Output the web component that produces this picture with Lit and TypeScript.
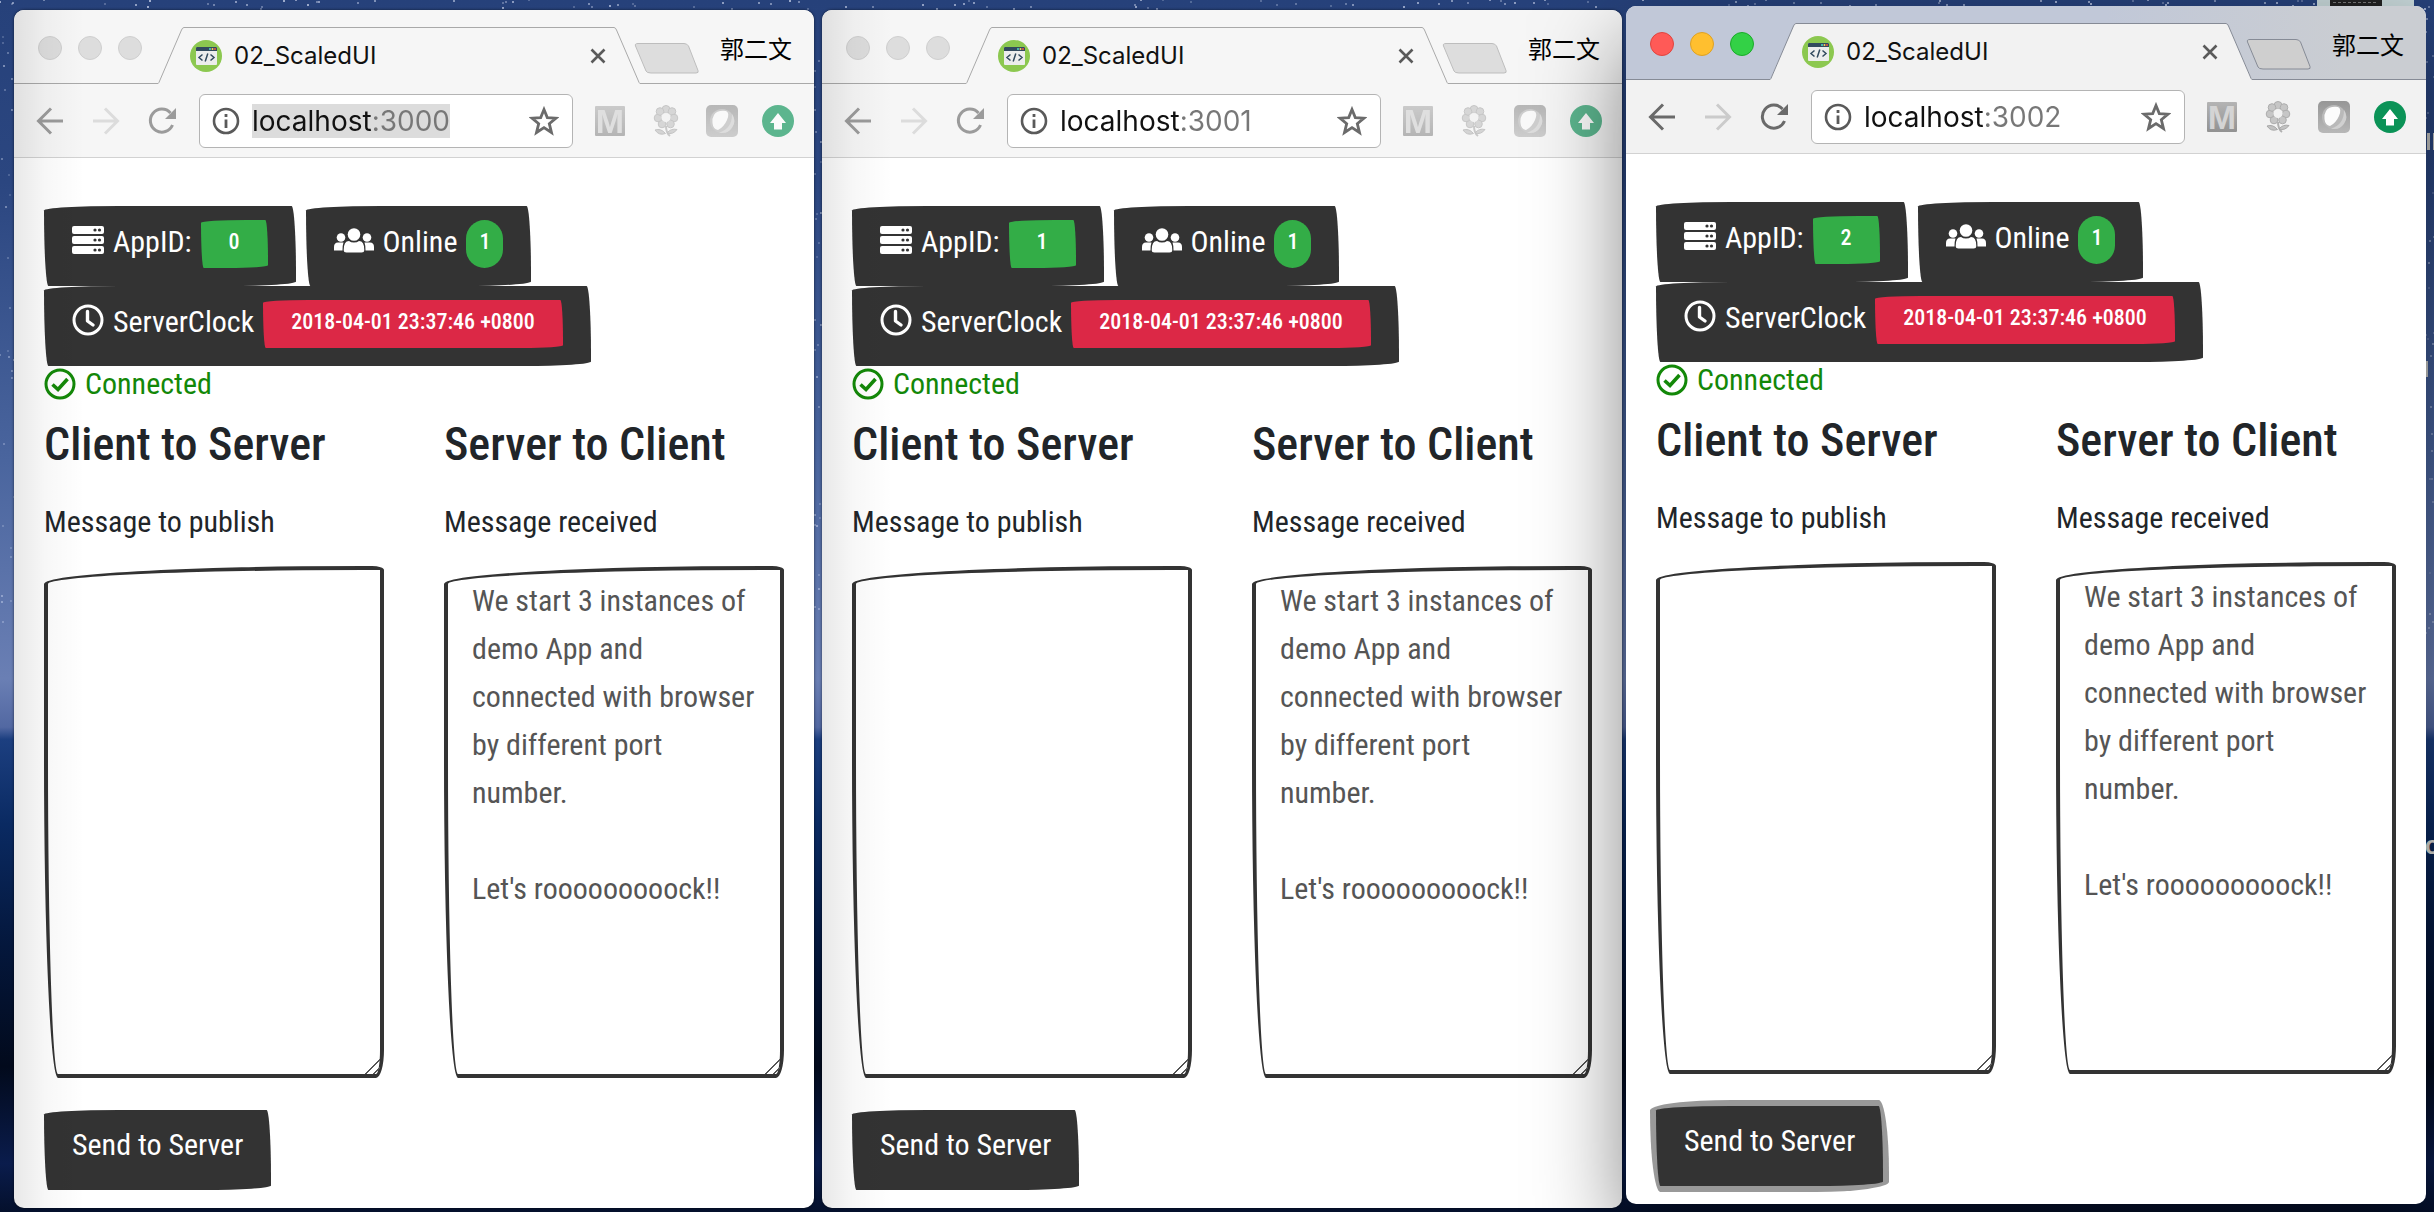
import { LitElement, html, css, svg } from "lit";
import { customElement, property } from "lit/decorators.js";
import { classMap } from "lit/directives/class-map.js";

const MESSAGE = `We start 3 instances of demo App and connected with browser by different port number.

Let's rooooooooock!!`;

const icons = {
  back: html`<svg viewBox="0 0 32 32" width="32" height="32" aria-hidden="true"><path d="M29 16H4.500M17 3.500L4.500 16L17 28.500" fill="none" stroke="currentColor" stroke-width="3"/></svg>`,
  forward: html`<svg viewBox="0 0 32 32" width="32" height="32" aria-hidden="true"><path d="M3 16H27.500M15 3.500L27.500 16L15 28.500" fill="none" stroke="currentColor" stroke-width="3"/></svg>`,
  reload: html`<svg viewBox="0 0 32 32" width="32" height="32" aria-hidden="true">
    <path d="M26.500 20A11.500 11.500 0 1 1 24.500 8" fill="none" stroke="currentColor" stroke-width="3"/>
    <path d="M30 3V14H19Z" fill="currentColor"/></svg>`,
  info: html`<svg viewBox="0 0 28 28" width="28" height="28" aria-hidden="true">
    <circle cx="14" cy="14" r="12" fill="none" stroke="#5a5a5a" stroke-width="2.600"/>
    <path d="M14 12.500V21M14 7V10" stroke="#5a5a5a" stroke-width="2.800"/></svg>`,
  star: html`<svg viewBox="0 0 30 30" width="30" height="30" aria-hidden="true">
    <path d="M15 3.500L18.300 11.600L27 12.200L20.300 17.700L22.500 26.500L15 21.600L7.500 26.500L9.700 17.700L3 12.200L11.700 11.600Z" fill="none" stroke="#6b6b6b" stroke-width="2.800" stroke-linejoin="miter"/></svg>`,
  close: html`<svg viewBox="0 0 16 16" width="16" height="16" aria-hidden="true"><path d="M1.500 1.500L14.500 14.500M14.500 1.500L1.500 14.500" stroke="#5a5a5a" stroke-width="2.600"/></svg>`,
  favicon: html`<svg viewBox="0 0 32 32" width="32" height="32" aria-hidden="true">
    <circle cx="16" cy="16" r="16" fill="#8cc850"/>
    <rect x="6" y="7" width="21" height="18" rx="1" fill="#eceded"/>
    <path d="M6 11V8a1 1 0 0 1 1-1H26a1 1 0 0 1 1 1V11Z" fill="#324a5e"/>
    <circle cx="20" cy="9" r="1" fill="#4cdbc4"/><circle cx="22.500" cy="9" r="1" fill="#ffd05b"/><circle cx="25" cy="9" r="1" fill="#f1543f"/>
    <path d="M12.500 14.500L9 17.500L12.500 20.500M20.500 14.500L24 17.500L20.500 20.500M17.800 13.500L15.200 21.500" fill="none" stroke="#324a5e" stroke-width="1.500"/></svg>`,
  gmail: html`<svg viewBox="0 0 32 32" width="32" height="32" aria-hidden="true">
    <defs><linearGradient id="mg" x2="0" y2="1"><stop stop-color="#b4b4b4"/><stop offset="1" stop-color="#929292"/></linearGradient></defs>
    <rect x="1" y="1" width="30" height="30" rx="1" fill="url(#mg)"/>
    <text x="16" y="28" text-anchor="middle" font-family="Liberation Sans" font-weight="bold" font-size="34" fill="#d4d4d4">M</text></svg>`,
  flower: html`<svg viewBox="0 0 32 32" width="32" height="32" aria-hidden="true">
    <g fill="#c6c6c6" stroke="#adadad">
      <circle cx="16" cy="4.500" r="4"/><circle cx="22" cy="6.500" r="3.800"/><circle cx="24" cy="13" r="3.800"/><circle cx="20.500" cy="19" r="3.800"/>
      <circle cx="12" cy="19" r="3.800"/><circle cx="8" cy="13" r="3.800"/><circle cx="10" cy="6.500" r="3.800"/>
    </g>
    <circle cx="16" cy="12.500" r="4.600" fill="#f2f2f2"/>
    <path d="M16 21Q16 28 20 31" fill="none" stroke="#b0b0b0" stroke-width="2"/>
    <path d="M5 25Q11 23 15.500 28.500Q9 31 5 25ZM27 24.500Q21 23 17 28Q23 30 27 24.500Z" fill="#c2c2c2" stroke="#a8a8a8"/></svg>`,
  bowl: html`<svg viewBox="0 0 32 32" width="32" height="32" aria-hidden="true">
    <defs><linearGradient id="bg" x2="0" y2="1"><stop stop-color="#969696"/><stop offset="1" stop-color="#b8b8b8"/></linearGradient></defs>
    <rect width="32" height="32" rx="5" fill="url(#bg)"/>
    <circle cx="16" cy="16" r="12" fill="#b9b9b9"/>
    <path d="M26 9A12 12 0 0 1 13 27.500Q26 24 26 9Z" fill="#d0d0d0"/>
    <path d="M8 10Q11 5 20 6Q24 8 21 15Q18 22 12 25Q7 24 6.500 18Q6 13 8 10Z" fill="#fcfcfc"/></svg>`,
  upload: html`<svg viewBox="0 0 32 32" width="32" height="32" aria-hidden="true">
    <circle cx="16" cy="16" r="16" fill="#0b9357"/>
    <path d="M16 8L24 18H20V24.500H12V18H8Z" fill="#fff"/></svg>`,
  server: html`<svg viewBox="0 0 32 28" width="32" height="28" aria-hidden="true">
    <rect width="32" height="8" rx="2" fill="#fff"/><rect y="10" width="32" height="8" rx="2" fill="#fff"/><rect y="20" width="32" height="8" rx="2" fill="#fff"/>
    <g fill="#333"><circle cx="23" cy="4" r="1.600"/><circle cx="27.500" cy="4" r="1.600"/><circle cx="23" cy="14" r="1.600"/><circle cx="27.500" cy="14" r="1.600"/><circle cx="23" cy="24" r="1.600"/><circle cx="27.500" cy="24" r="1.600"/></g></svg>`,
  users: html`<svg viewBox="0 0 40 26" width="40" height="26" aria-hidden="true"><g fill="#fff">
    <circle cx="7" cy="10.500" r="4.300"/><circle cx="33" cy="10.500" r="4.300"/>
    <path d="M0 23.500V20Q0 15.500 4 15.500H9.500Q8.500 18 8.500 23.500ZM40 23.500V20Q40 15.500 36 15.500H30.500Q31.500 18 31.500 23.500Z"/>
    <circle cx="20" cy="7.500" r="6.300"/>
    <path d="M9.700 23Q9.700 14 15 14Q17 15.500 20 15.500T25 14Q30.300 14 30.300 23Q30.300 25.500 27.500 25.500H12.500Q9.700 25.500 9.700 23Z"/></g></svg>`,
  clock: html`<svg viewBox="0 0 32 32" width="32" height="32" aria-hidden="true">
    <circle cx="16" cy="16" r="14" fill="none" stroke="#fff" stroke-width="3"/>
    <path d="M15.500 7.500V17L21 21" fill="none" stroke="#fff" stroke-width="3.400" stroke-linecap="round" stroke-linejoin="round"/></svg>`,
  check: html`<svg viewBox="0 0 32 32" width="32" height="32" aria-hidden="true">
    <circle cx="16" cy="16" r="14" fill="none" stroke="#138808" stroke-width="3"/>
    <path d="M8.500 16.500L14 21.500L23.500 11" fill="none" stroke="#138808" stroke-width="3.600"/></svg>`,
};

@customElement("status-button")
export class StatusButton extends LitElement {
  static styles = css`
    :host { display: block; }
    .status {
      display: flex;
      align-items: flex-start;
      gap: 9px;
      height: 80px;
      padding: 14px 28px 0;
      border: 0;
      border-radius: 255px 15px 225px 15px / 15px 225px 15px 255px;
      background: #333;
      color: #fff;
      font: 30px/44px "Roboto Condensed", "Liberation Sans", sans-serif;
    }
    .icon { display: flex; align-items: center; height: 40px; }
    .badge {
      height: 48px;
      padding: 0 28px;
      border-radius: 255px 15px 225px 15px / 15px 225px 15px 255px;
      background: #33ad47;
      font-size: 22px;
      font-weight: 500;
    }
    .danger { background: #dc2846; }
    .pill { padding: 0 13px; border-radius: 20px; }
  `;
  @property() label = "";
  @property() value = "";
  @property() tone = "";
  @property({ attribute: false }) icon: unknown;

  render() {
    return html`<button class="status" type="button">
      <span class="icon">${this.icon}</span>
      <span>${this.label}</span>
      <span class=${classMap({ badge: true, danger: this.tone === "danger", pill: this.tone === "pill" })}>${this.value}</span>
    </button>`;
  }
}

@customElement("demo-page")
export class DemoPage extends LitElement {
  static styles = css`
    :host { display: block; font: 30px/48px "Roboto Condensed", "Liberation Sans", sans-serif; color: #212529; }
    .page { padding: 48px 30px 18px; }
    .statuses { display: flex; flex-wrap: wrap; gap: 0 10px; }
    .connection { display: flex; align-items: center; gap: 9px; height: 36px; color: #138808; }
    .columns { display: grid; grid-template-columns: 1fr 1fr; gap: 60px; margin-top: 12px; }
    h2 { margin: 0 0 24px; font-size: 46px; line-height: 60px; font-weight: 500; white-space: nowrap; }
    label { display: block; margin-bottom: 20px; }
    textarea {
      display: block;
      box-sizing: border-box;
      width: 100%;
      margin: 0;
      padding: 7px 24px 17px;
      border: 4px solid #333;
      border-radius: 320px 12px 8px 14px / 18px 4px 28px 320px;
      background: transparent;
      color: #555;
      font: 30px/48px "Roboto Condensed", "Liberation Sans", sans-serif;
      overflow: hidden;
      outline: none;
    }
    textarea::-webkit-resizer {
      background: linear-gradient(135deg, transparent 48%, #555 48%, #555 55%, transparent 55%, transparent 74%, #555 74%, #555 81%, transparent 81%);
    }
    .send {
      display: block;
      height: 80px;
      margin-top: 32px;
      padding: 0 28px 10px;
      border: 0;
      border-radius: 255px 15px 225px 15px / 15px 225px 15px 255px;
      background: #333;
      color: #fff;
      font: 30px/48px "Roboto Condensed", "Liberation Sans", sans-serif;
    }
    .ring { box-shadow: 0 0 0 6px #999; }
  `;
  @property({ type: Number }) appId = 0;
  @property({ type: Boolean }) focusedSend = false;

  render() {
    return html`<main class="page">
      <div class="statuses">
        <status-button .icon=${icons.server} label="AppID:" value=${String(this.appId)}></status-button>
        <status-button .icon=${icons.users} label="Online" value="1" tone="pill"></status-button>
        <status-button .icon=${icons.clock} label="ServerClock" value="2018-04-01 23:37:46 +0800" tone="danger"></status-button>
      </div>
      <div class="connection">${icons.check}<span>Connected</span></div>
      <div class="columns">
        <section>
          <h2>Client to Server</h2>
          <label for="publish">Message to publish</label>
          <textarea id="publish" rows="10"></textarea>
        </section>
        <section>
          <h2>Server to Client</h2>
          <label for="received">Message received</label>
          <textarea id="received" rows="10" .value=${MESSAGE}></textarea>
        </section>
      </div>
      <button type="button" class=${classMap({ send: true, ring: this.focusedSend })}>Send to Server</button>
    </main>`;
  }
}

@customElement("browser-window")
export class BrowserWindow extends LitElement {
  static styles = css`
    :host {
      display: block;
      position: relative;
      box-sizing: border-box;
      min-height: calc(100vh - 14px);
      border-radius: 10px;
      overflow: hidden;
      background: #fff;
      font-family: Inter, "Noto Sans CJK SC", sans-serif;
      --strip: #f6f6f6;
      --tab: #f6f6f6;
      --line: #a9a9a9;
      --plus: #dddddd;
      box-shadow: 0 0 3px rgba(0, 0, 0, 0.6);
    }
    :host([active]) {
      --strip: linear-gradient(90deg, #c1c8d8 60%, #cacdd2 90%);
      --tab: #f2f2f2;
      --line: #868b96;
      --plus: #cfcfcf;
      box-shadow: 0 36px 90px rgba(0, 0, 0, 0.5);
    }
    :host(:not([active]))::after {
      content: "";
      position: absolute;
      inset: 0 auto 0 0;
      width: 70px;
      background: linear-gradient(90deg, rgba(0, 0, 0, 0.09), rgba(0, 0, 0, 0.03) 45%, transparent);
      pointer-events: none;
    }
    button { display: flex; padding: 0; border: 0; background: none; color: inherit; }
    .strip { display: flex; height: 74px; padding: 0 22px 0 24px; box-sizing: border-box; background: var(--strip); box-shadow: inset 0 -1px var(--line); }
    .lights { display: flex; gap: 16px; margin: 26px 16px 0 0; }
    .light { box-sizing: border-box; width: 24px; height: 24px; border: 1px solid #cfcfcf; border-radius: 50%; background: #dddddd; }
    :host([active]) .red { background: #ff5a57; border-color: #e0443e; }
    :host([active]) .amber { background: #ffbf2f; border-color: #dea123; }
    :host([active]) .green { background: #33d146; border-color: #1aab29; }
    .tab { display: flex; flex: 1; margin-top: 17px; }
    .slant { flex: none; fill: var(--tab); stroke: var(--line); }
    .face { display: flex; flex: 1; align-items: center; gap: 12px; padding: 0 8px 0 6px; border-top: 1px solid var(--line); background: var(--tab); }
    .title { flex: 1; font-size: 24px; line-height: 32px; color: #111; }
    .plus { flex: none; margin: 32px 20px 0 -6px; align-self: flex-start; fill: var(--plus); stroke: var(--line); }
    :host(:not([active])) .plus { stroke: #bdbdbd; }
    .user { margin-top: 20px; font: 24px/36px "Noto Sans CJK SC", sans-serif; color: #000; }
    .toolbar { display: flex; align-items: center; gap: 24px; height: 73px; padding: 0 20px; border-bottom: 1px solid #d2d2d2; background: var(--tab); color: #6a6a6a; }
    :host(:not([active])) .toolbar { color: #9b9b9b; }
    .off { opacity: 0.28; }
    .address { display: flex; flex: 1; align-items: center; gap: 12px; height: 52px; margin: 0 -3px; padding: 0 13px 0 12px; border: 1px solid #b4b4b4; border-radius: 6px; background: #fff; }
    .field { flex: 1; display: flex; }
    .mark { display: flex; }
    .selected { background: #dcdcdc; }
    .url {
      field-sizing: content;
      padding: 0;
      border: 0;
      outline: none;
      font: 28px/34px Inter, sans-serif;
      color: transparent;
      background: linear-gradient(90deg, #111 121px, #777 121px);
      background-clip: text;
      -webkit-background-clip: text;
    }
    .extension { flex: none; }
    :host(:not([active])) .extension { opacity: 0.65; }
  `;
  @property({ type: Boolean, reflect: true }) active = false;
  @property({ type: Boolean }) selected = false;
  @property({ type: Number }) instance = 0;

  render() {
    return html`
      <header>
        <div class="strip">
          <div class="lights">
            <button class="light red" aria-label="Close window"></button>
            <button class="light amber" aria-label="Minimise window"></button>
            <button class="light green" aria-label="Zoom window"></button>
          </div>
          <div class="tab">
            <svg class="slant" width="26" height="57" aria-hidden="true"><path stroke="none" d="M0 57L24 2Q25 0 26 0V57Z"/><path fill="none" d="M0 56.500Q1 56 2 53L23.500 3Q24.500 0.500 26 0.500"/></svg>
            <div class="face">
              ${icons.favicon}
              <span class="title">02_ScaledUI</span>
              <button aria-label="Close tab">${icons.close}</button>
            </div>
            <svg class="slant" width="26" height="57" aria-hidden="true"><path stroke="none" d="M26 57L2 2Q1 0 0 0V57Z"/><path fill="none" d="M26 56.500Q25 56 24 53L2.500 3Q1.500 0.500 0 0.500"/></svg>
          </div>
          <svg class="plus" width="66" height="32" aria-hidden="true"><path d="M4 1.500H50Q53 1.500 54.500 4L64 28.500Q65 31 62 31H17Q13 31 12 29L1.500 4Q0.500 1.500 4 1.500Z"/></svg>
          <span class="user">郭二文</span>
        </div>
        <div class="toolbar">
          <button aria-label="Back">${icons.back}</button>
          <button class="off" aria-label="Forward">${icons.forward}</button>
          <button aria-label="Reload">${icons.reload}</button>
          <div class="address">
            ${icons.info}
            <div class="field"><span class=${classMap({ mark: true, selected: this.selected })}>
              <input class="url" type="text" aria-label="Address" .value=${`localhost:${3000 + this.instance}`} />
            </span></div>
            <button aria-label="Bookmark">${icons.star}</button>
          </div>
          <button class="extension" aria-label="Mail">${icons.gmail}</button>
          <button class="extension" aria-label="Flower">${icons.flower}</button>
          <button class="extension" aria-label="Bowl">${icons.bowl}</button>
          <button class="extension" aria-label="Upload">${icons.upload}</button>
        </div>
      </header>
      <demo-page .appId=${this.instance} .focusedSend=${this.active}></demo-page>
    `;
  }
}

@customElement("app-root")
export class AppRoot extends LitElement {
  static styles = css`
    :host { display: block; }
    .desktop {
      position: relative;
      display: flex;
      align-items: flex-start;
      gap: 8px;
      box-sizing: border-box;
      min-height: 100vh;
      padding: 6px 8px 4px 14px;
      overflow: hidden;
      background: linear-gradient(#26417a 0, #2b4680 15%, #4a659e 38%, #6a7fb4 56%, #5268a2 60%, #1c3f80 61%, #0a2a62 68%, #04173c 78%, #020a1c 88%, #0a1c4c 96%, #04102c 100%);
    }
    .stars { position: absolute; inset: 0; width: 100%; height: 100%; }
    .shelf { position: absolute; top: 0; right: 20px; }
    .name { position: absolute; right: -6px; top: 828px; font: bold 25px/34px "Liberation Sans", sans-serif; color: #e4e2dc; }
    browser-window { flex: 1 1 0; min-width: 0; margin-top: 4px; }
    browser-window[active] { margin: 0 0 0 -4px; }
  `;

  private stars() {
    const points: unknown[] = [];
    let seed = 17;
    const next = () => (seed = (seed * 16807) % 2147483647) / 2147483647;
    for (let i = 0; i < 130; i++) {
      points.push(svg`<circle cx=${Math.round(next() * 2434)} cy=${Math.round(next() * 9)} r="1" opacity=${(0.3 + next() * 0.6).toFixed(2)}/>`);
    }
    for (const [left, span] of [[0, 14], [814, 8], [2426, 8]]) {
      for (let i = 0; i < 28; i++) {
        points.push(svg`<circle cx=${Math.round(left + next() * span)} cy=${Math.round(next() * 640)} r="1" opacity=${(0.2 + next() * 0.4).toFixed(2)}/>`);
      }
    }
    return points;
  }

  render() {
    return html`<div class="desktop">
      <svg class="stars" fill="#dfe6fa" aria-hidden="true">${this.stars()}
        <g fill="#c9c9c6"><rect x="2427" y="133" width="3" height="17"/><rect x="2433" y="133" width="1" height="17"/><rect x="2426" y="361" width="2" height="16"/></g>
      </svg>
      <svg class="shelf" width="97" height="8" aria-hidden="true"><rect width="97" height="8" fill="#c6d6d8"/><rect x="13" width="52" height="6" fill="#222"/><path d="M16 2.500H61" stroke="#777" stroke-dasharray="3 2"/></svg>
      <span class="name">o</span>
      <browser-window .instance=${0} .selected=${true}></browser-window>
      <browser-window .instance=${1}></browser-window>
      <browser-window .instance=${2} active></browser-window>
    </div>`;
  }
}
